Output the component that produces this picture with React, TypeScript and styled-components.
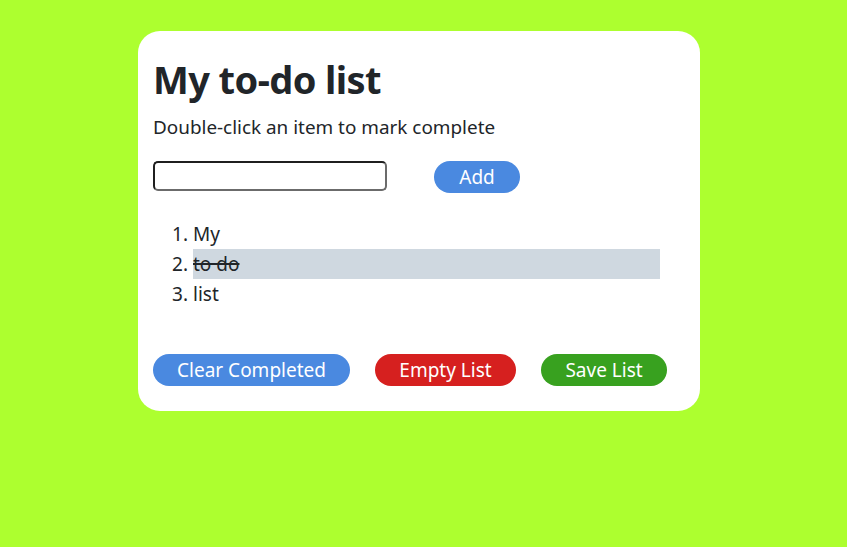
import React from "react";
import styled, { createGlobalStyle } from "styled-components";

const Global = createGlobalStyle`
  html, body { margin: 0; padding: 0; background: #adff2f; }
  body { font-family: "Noto Sans", "Open Sans", sans-serif; color: #212529; }
`;

const Page = styled.div`
  padding: 31px 0 0 138px;
`;

const Card = styled.div`
  width: 562px;
  height: 380px;
  box-sizing: border-box;
  background: #fff;
  border-radius: 22px;
  padding: 18px 15px 0 15px;
  display: flex;
  flex-direction: column;
`;

const Title = styled.h1`
  margin: 0;
  font-size: 38px;
  line-height: 60px;
  font-weight: 700;
  letter-spacing: -0.6px;
`;

const Subtitle = styled.p`
  margin: 0;
  font-size: 18.9px;
  line-height: 30px;
  margin-top: 3px;
`;

const InputRow = styled.div`
  display: flex;
  align-items: flex-start;
  gap: 47px;
  margin-top: 19px;
`;

const TextInput = styled.input`
  width: 234px;
  height: 30px;
  box-sizing: border-box;
  border: 2px solid #1f1f1f;
  border-bottom-color: #6b6b6b;
  border-right-color: #6b6b6b;
  border-radius: 5px;
  outline: none;
  font-size: 16px;
  padding: 0 6px;
`;

const Pill = styled.button<{ $bg: string; $w: number }>`
  width: ${(p) => p.$w}px;
  height: 32px;
  border: none;
  border-radius: 16px;
  background: ${(p) => p.$bg};
  color: #fff;
  font-family: inherit;
  font-size: 19px;
  line-height: 32px;
  padding: 0;
  cursor: pointer;
`;

const List = styled.ol`
  margin: 26px 0 0 0;
  padding: 0 0 0 40px;
  font-size: 19px;
  line-height: 30px;
  width: 467px;
`;

const Item = styled.li<{ $done?: boolean }>`
  height: 30px;
  background: ${(p) => (p.$done ? "#cfd8e0" : "transparent")};
  text-decoration: ${(p) => (p.$done ? "line-through" : "none")};
  text-decoration-thickness: 2px;
`;

const ButtonRow = styled.div`
  display: flex;
  gap: 25px;
  margin-top: 45px;
`;

export default function App() {
  return (
    <>
      <Global />
      <Page>
        <Card>
          <Title>My to-do list</Title>
          <Subtitle>Double-click an item to mark complete</Subtitle>
          <InputRow>
            <TextInput type="text" />
            <Pill $bg="#4a89e0" $w={86}>Add</Pill>
          </InputRow>
          <List>
            <Item>My</Item>
            <Item $done>to do</Item>
            <Item>list</Item>
          </List>
          <ButtonRow>
            <Pill $bg="#4a89e0" $w={197}>Clear Completed</Pill>
            <Pill $bg="#d6201f" $w={141}>Empty List</Pill>
            <Pill $bg="#38a11f" $w={126}>Save List</Pill>
          </ButtonRow>
        </Card>
      </Page>
    </>
  );
}
